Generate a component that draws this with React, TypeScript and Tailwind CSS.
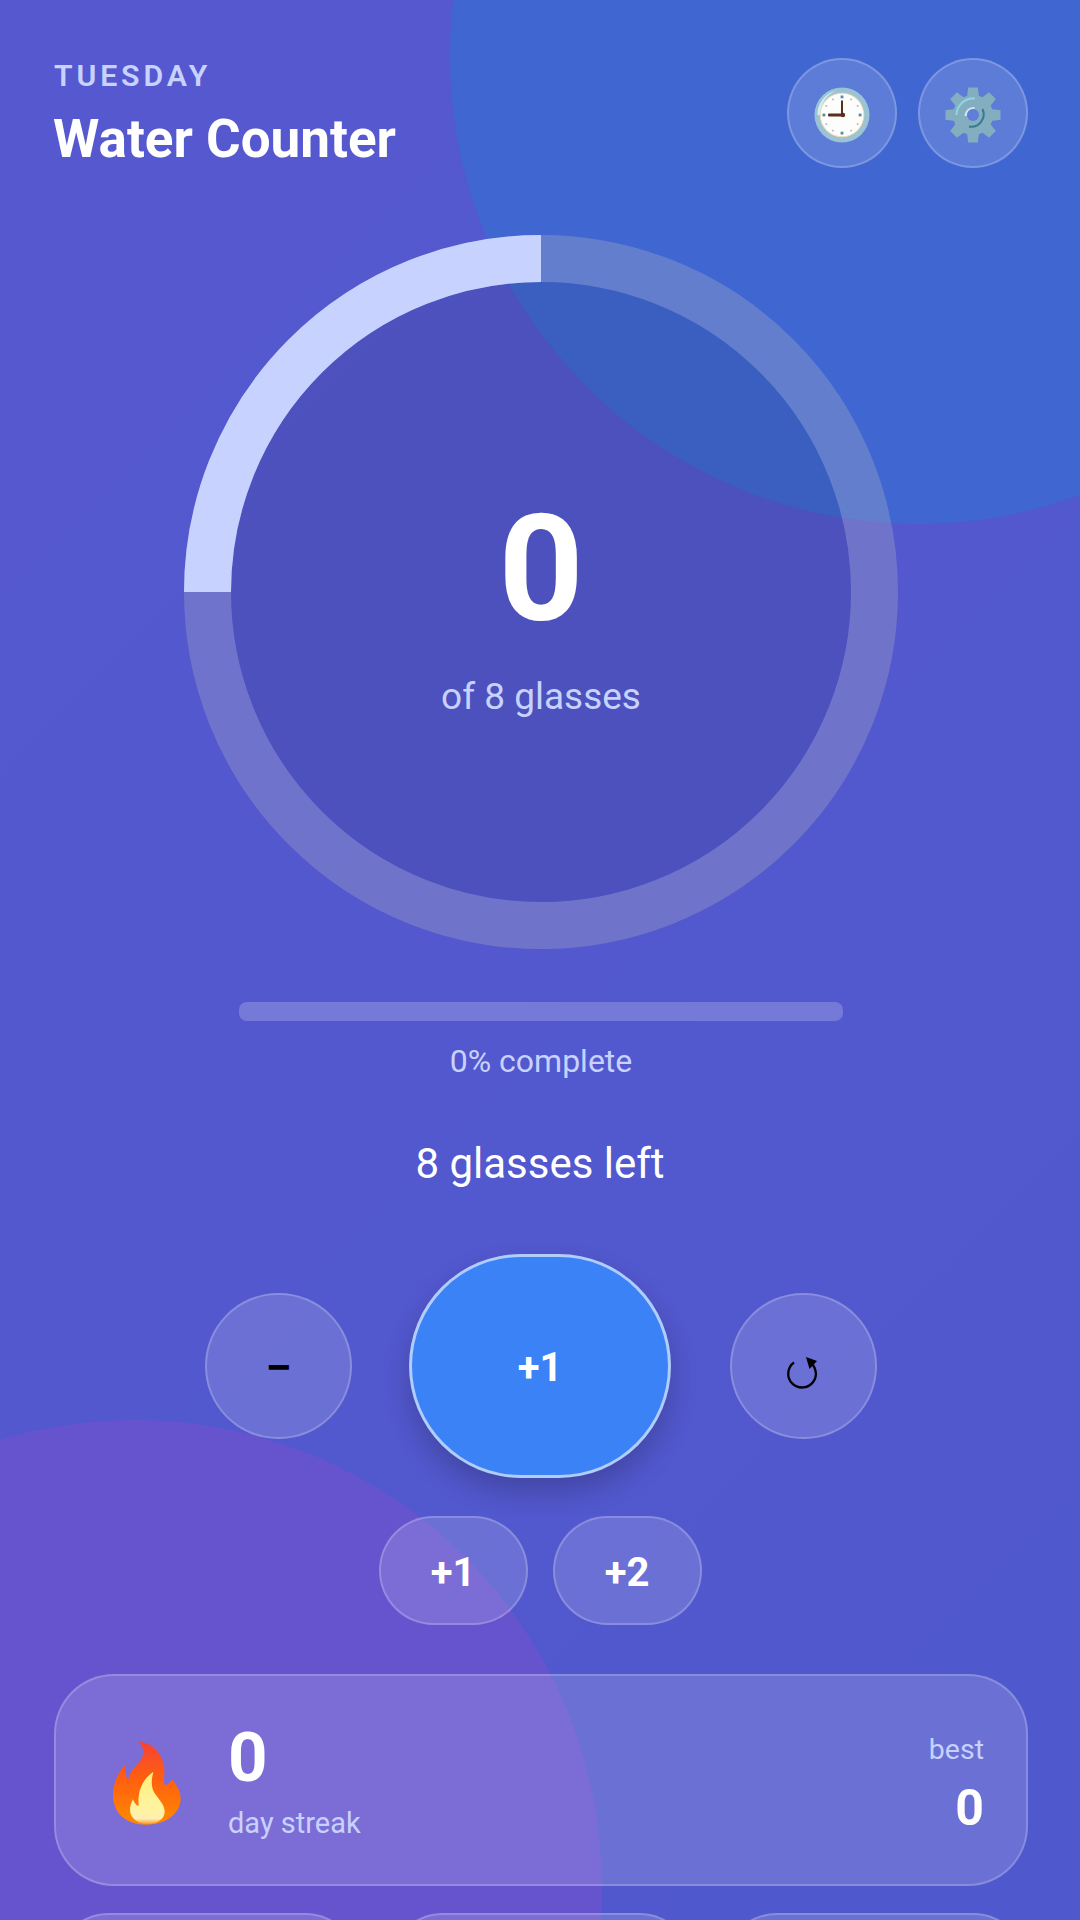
import React from "react";

const ff = { fontFamily: "Roboto, sans-serif" };

function Clock() {
  return (
    <svg width="56" height="56" viewBox="0 0 56 56" className="mt-[4px]">
      <circle cx="28" cy="28" r="27.5" fill="#9cc3d3" />
      <path d="M3.5 28A24.5 24.5 0 0 1 23 3.5C13 7 7 15 6 28z" fill="#d4eef5" />
      <circle cx="28" cy="28" r="21.8" fill="#fdfdfb" stroke="#f1dcb8" strokeWidth="1" />
      {[0, 90, 180, 270].map((a) => (
        <rect key={a} x="26.6" y="8.5" width="2.8" height="2.8" fill="#4f8fa6" transform={`rotate(${a} 28 28)`} />
      ))}
      {[30, 60, 120, 150, 210, 240, 300, 330].map((a) => (
        <rect key={a} x="27.2" y="9" width="1.6" height="1.8" fill="#a8b8c0" transform={`rotate(${a} 28 28)`} />
      ))}
      <rect x="27" y="13.5" width="2" height="15" fill="#5b2e22" />
      <rect x="14" y="26.6" width="15" height="2.8" rx="1" fill="#5b2e22" />
      <circle cx="29" cy="28" r="2.2" fill="#5b2e22" />
    </svg>
  );
}

function Gear() {
  return (
    <svg width="56" height="56" viewBox="0 0 56 56" className="mt-[3px]">
      {[0, 45, 90, 135].map((a) => (
        <path key={a} d="M23.2 0.5H32.8L34 10H22ZM23.2 55.5H32.8L34 46H22Z" fill="#84adc0" transform={`rotate(${a} 28 28)`} />
      ))}
      <circle cx="28" cy="28" r="20" fill="#84adc0" />
      <path d="M11.5 28A17 17 0 0 1 30 11.5" fill="none" stroke="#8fd4e0" strokeWidth="2.2" />
      <path d="M20.5 29A8.5 8.5 0 0 1 29.5 21" fill="none" stroke="#cbe9ee" strokeWidth="2.2" />
      <path d="M37.5 22A12.5 12.5 0 0 1 24 39.5" fill="none" stroke="#2f7d90" strokeWidth="2" />
      <circle cx="28" cy="28" r="6" fill="#5f7ed8" />
    </svg>
  );
}

function Flame() {
  return (
    <svg width="68" height="84" viewBox="55 33 204 252" className="mt-[5px] shrink-0">
      <defs>
        <linearGradient id="f1" x1="0" y1="0" x2="0" y2="1">
          <stop offset="0" stopColor="#f44336" />
          <stop offset="0.45" stopColor="#ff5f10" />
          <stop offset="1" stopColor="#ff8a00" />
        </linearGradient>
        <linearGradient id="f2" x1="0" y1="0" x2="0" y2="1">
          <stop offset="0" stopColor="#fff176" />
          <stop offset="0.78" stopColor="#fff3a6" />
          <stop offset="0.9" stopColor="#ffeeb5" />
          <stop offset="1" stopColor="#ff9a20" />
        </linearGradient>
      </defs>
      <path d="M130 35C165 35 200 60 208 110C212 135 202 160 212 165C222 165 228 155 232 148C250 170 258 190 258 205C258 250 215 284 156 284C95 284 55 250 55 195C55 160 70 125 92 105C92 125 93 140 100 152C105 125 120 110 135 95C150 75 150 50 130 35z" fill="url(#f1)" />
      <path d="M176 125C170 150 168 170 180 190C195 212 210 225 210 245C210 268 185 282 158 282C130 282 106 265 106 240C106 228 110 218 115 208C120 220 125 228 132 228C128 190 140 150 176 125z" fill="url(#f2)" />
    </svg>
  );
}

function Reset() {
  return (
    <svg width="40" height="40" viewBox="0 0 40 40" className="overflow-visible">
      <path d="M10 16.5A13.8 13.8 0 1 0 24.5 15.5" fill="none" stroke="#000" strokeWidth="2.3" />
      <path d="M22 11L33 15L25.5 23z" fill="#000" />
    </svg>
  );
}

export default function App() {
  return (
    <div
      style={ff}
      className="relative w-[1080px] h-[1920px] overflow-hidden bg-[linear-gradient(135deg,#5658d0,#5058cd)]"
    >
      <div className="absolute left-[450px] top-[-411px] w-[935px] h-[935px] rounded-full bg-[#4066d2]" />
      <div className="absolute left-[-333px] top-[1420px] w-[935px] h-[935px] rounded-full bg-[#6654cf]" />

      <div className="relative flex flex-col items-center pl-[54px] pr-[52px] pt-[58px]">
        <div className="w-full flex justify-between items-start">
          <div className="flex flex-col">
            <div className="text-[30.25px] leading-[36px] font-semibold tracking-[3.85px] text-[#c7d2fe]">TUESDAY</div>
            <div className="mt-[13px] ml-[-1px] text-[53px] leading-[64px] font-bold text-white">Water Counter</div>
          </div>
          <div className="flex gap-[21px]">
            <button className="w-[110px] h-[110px] rounded-full bg-white/15 border-[2px] border-white/20 flex items-center justify-center">
              <Clock />
            </button>
            <button className="w-[110px] h-[110px] rounded-full bg-white/15 border-[2px] border-white/20 flex items-center justify-center">
              <Gear />
            </button>
          </div>
        </div>

        <div className="mt-[64px] relative w-[714px] h-[714px] rounded-full bg-black/[.08] flex flex-col items-center justify-center">
          <svg className="absolute inset-0" width="714" height="714" viewBox="0 0 714 714">
            <circle cx="357" cy="357" r="333.5" fill="none" stroke="rgba(255,255,255,0.2)" strokeWidth="47" />
            <path d="M23.5 357A333.5 333.5 0 0 1 357 23.5" fill="none" stroke="#c7d2fe" strokeWidth="47" />
          </svg>
          <div className="relative text-[148.5px] leading-[209px] font-bold text-white">0</div>
          <div className="relative mt-[1px] text-[37px] leading-[44px] text-[#c7d2fe]">of 8 glasses</div>
        </div>

        <div className="mt-[53px] w-[604px] h-[19px] rounded-[8px] bg-white/20" />
        <div className="mt-[22px] text-[32px] leading-[36px] text-[#c7d2fe]">0% complete</div>
        <div className="mt-[60px] ml-[-2px] text-[42px] leading-[50px] text-white">8 glasses left</div>

        <div className="mt-[65px] flex items-center">
          <button className="w-[147px] h-[146px] pt-[3px] rounded-full bg-white/15 border-[2px] border-white/20 text-black text-[48px] font-semibold leading-none">−</button>
          <button className="ml-[57px] w-[262px] h-[224px] pt-[4px] rounded-[120px] bg-[#3b82f6] border-[3px] border-white/60 shadow-[0_14px_28px_rgba(0,0,0,0.2)] text-white text-[40px] font-bold">+1</button>
          <button aria-label="↺" className="ml-[59px] w-[147px] h-[146px] rounded-full bg-white/15 border-[2px] border-white/20 flex items-center justify-center">
            <Reset />
          </button>
        </div>

        <div className="mt-[38px] mr-[2px] flex gap-[25px]">
          <button className="w-[149px] h-[109px] pt-[4px] rounded-[55px] bg-white/15 border-[2px] border-white/20 text-white text-[40px] font-bold">+1</button>
          <button className="w-[149px] h-[109px] pt-[4px] rounded-[55px] bg-white/15 border-[2px] border-white/20 text-white text-[40px] font-bold">+2</button>
        </div>

        <div className="mt-[49px] w-full h-[212px] rounded-[60px] bg-white/15 border-[2px] border-white/20 flex items-center pl-[57px] pr-[42px]">
          <Flame />
          <div className="ml-[47px] flex flex-col">
            <div className="text-[69px] leading-[78px] font-bold text-white">0</div>
            <div className="mt-[8px] text-[29px] leading-[36px] text-[#c7d2fe]">day streak</div>
          </div>
          <div className="ml-auto pt-[2px] flex flex-col items-end">
            <div className="text-[28.5px] leading-[36px] text-[#c7d2fe]">best</div>
            <div className="mt-[18px] text-[50px] leading-[44px] font-bold text-white">0</div>
          </div>
        </div>

        <div className="mt-[27px] w-full grid grid-cols-3 gap-[27.5px]">
          <div className="h-[120px] rounded-[55px] bg-white/15 border-[2px] border-white/20" />
          <div className="h-[120px] rounded-[55px] bg-white/15 border-[2px] border-white/20" />
          <div className="h-[120px] rounded-[55px] bg-white/15 border-[2px] border-white/20" />
        </div>
      </div>
    </div>
  );
}
